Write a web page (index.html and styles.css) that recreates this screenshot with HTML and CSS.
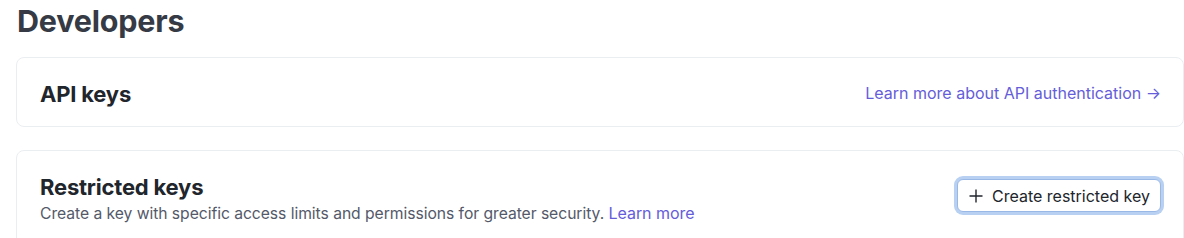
FILE: index.html
```html
<!DOCTYPE html>
<html lang="en">

<head>
    <meta charset="UTF-8">
    <meta name="viewport" content="width=device-width, initial-scale=1.0">
    <link rel="stylesheet" href="styles.css">
    <title>Developers</title>
</head>

<body>
    <h1 class="page-title">Developers</h1>

    <section class="card">
        <div class="card-row">
            <h2>API keys</h2>
            <a href="#" class="link">Learn more about API authentication →</a>
        </div>
    </section>

    <section class="card card-restricted">
        <div class="card-row">
            <div>
                <h2>Restricted keys</h2>
                <p class="desc">Create a key with specific access limits and permissions for greater security. <a href="#" class="link">Learn more</a></p>
            </div>
            <button class="btn">
                <svg width="14" height="14" viewBox="0 0 14 14"><path d="M7 0.5v13M0.5 7h13" stroke="#21252c" stroke-width="1.4" fill="none"/></svg>
                Create restricted key
            </button>
        </div>
    </section>
</body>

</html>
```

FILE: styles.css
```css
* {
    margin: 0;
    padding: 0;
    box-sizing: border-box;
}

body {
    background-color: white;
    font-family: Inter, "Noto Sans", sans-serif;
    color: #21252c;
    padding: 0 0 0 16px;
}

.page-title {
    font-size: 30.5px;
    font-weight: 700;
    color: #353a44;
    line-height: 42px;
    padding-left: 1px;
    letter-spacing: -0.2px;
}

.card {
    margin-top: 15px;
    border: 1px solid #ebeef1;
    border-radius: 8px;
    padding: 0 22px 0 23px;
    height: 70px;
    display: flex;
    align-items: center;

    h2 {
        font-size: 22px;
        font-weight: 700;
        letter-spacing: -0.2px;
        line-height: 28px;
    }
}

.card-row {
    width: 100%;
    display: flex;
    justify-content: space-between;
    align-items: center;
}

.card > .card-row > h2 {
    margin-top: 3px;
}

.card > .card-row > .link {
    margin-top: 2px;
}

.link {
    color: #655dd9;
    text-decoration: none;
    font-size: 16px;
}

.card-restricted {
    margin-top: 23px;
    height: 100px;
    align-items: flex-start;
    padding-top: 22px;
}

.desc {
    font-size: 15.7px;
    color: #545969;
    margin-top: 2px;
    letter-spacing: -0.05px;

    .link {
        font-size: 16px;
    }
}

.btn {
    display: flex;
    align-items: center;
    gap: 9px;
    height: 33px;
    padding: 0 10px 0 11px;
    margin-bottom: 5px;
    font-family: inherit;
    font-size: 16px;
    color: #21252c;
    background: white;
    border: 1px solid #9ab8e6;
    border-radius: 6px;
    box-shadow: 0 0 0 3px #b8d0f1;
}
```
